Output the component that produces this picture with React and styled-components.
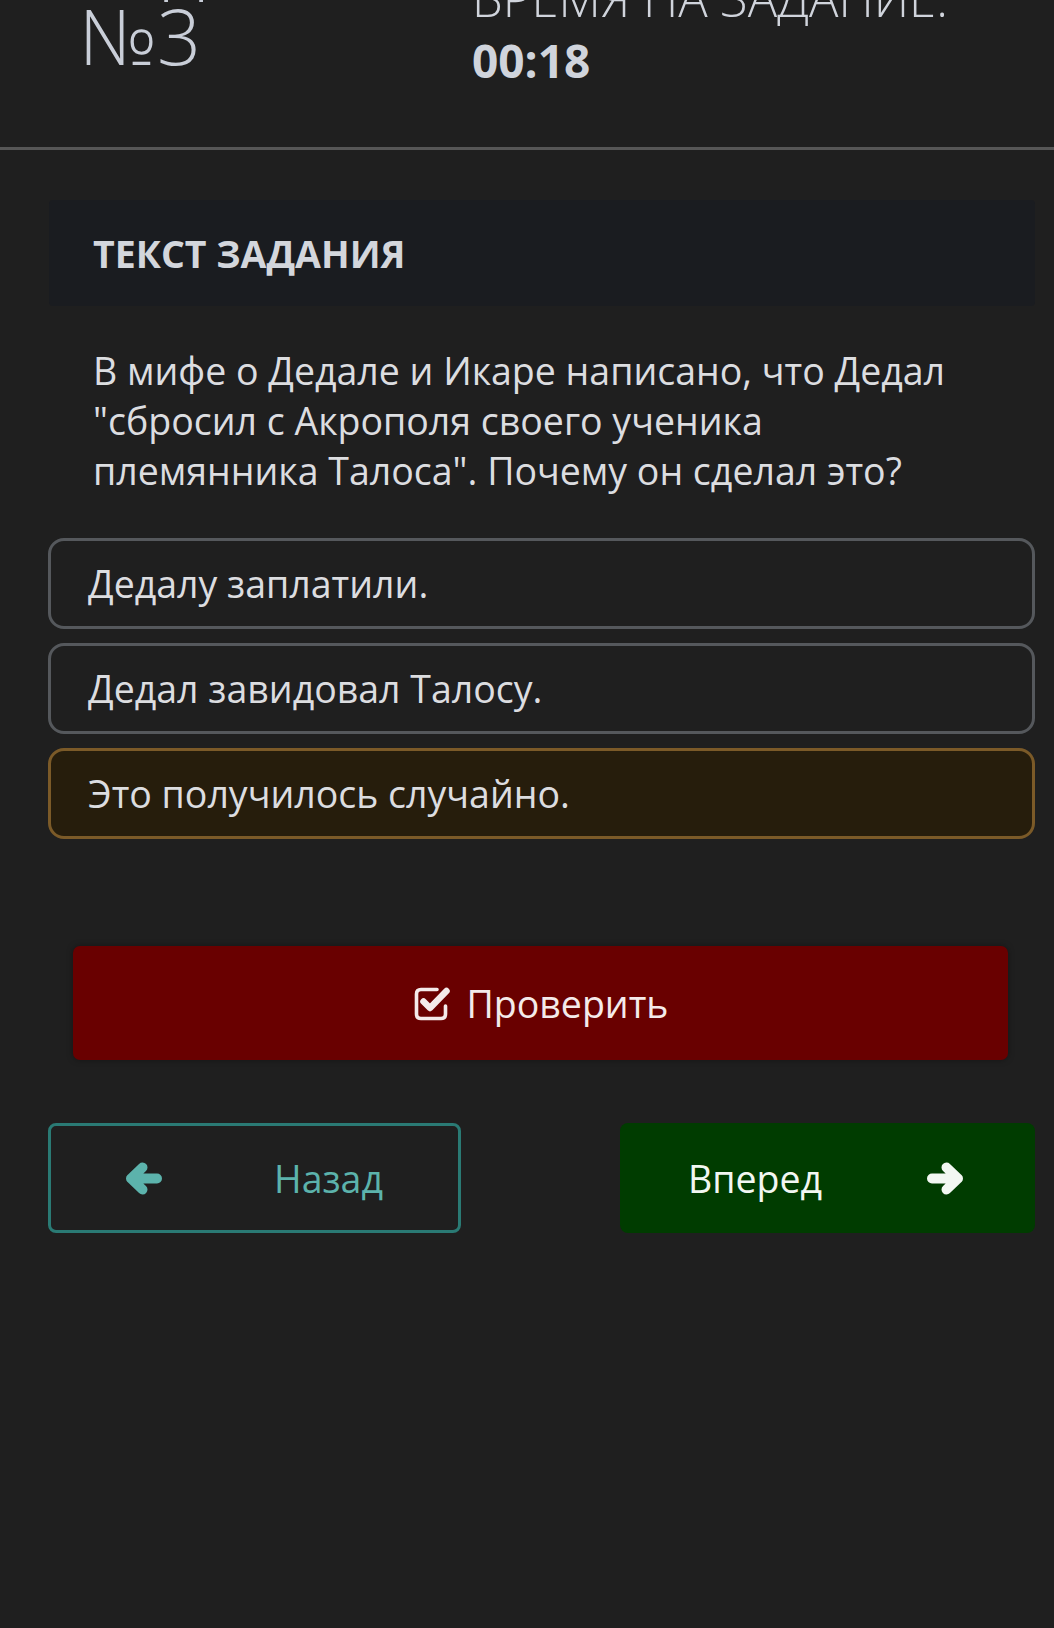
import React from "react";
import styled, { createGlobalStyle } from "styled-components";

const Global = createGlobalStyle`
  html, body {
    margin: 0;
    padding: 0;
    background: #1f1f1f;
    font-family: "Open Sans", "Noto Sans", sans-serif;
    overflow: hidden;
  }
  * { box-sizing: border-box; }
`;

const Page = styled.div`
  width: 1054px;
  min-height: 1628px;
  background: #1f1f1f;
  color: #dcdde0;
  overflow: hidden;
`;

const Header = styled.header`
  margin-top: -80px;
  height: 230px;
  border-bottom: 3px solid #565656;
  display: grid;
  grid-template-columns: 393px 1fr;
  padding-left: 79px;
  align-items: start;
`;

const TaskNumber = styled.h1`
  margin: 0;
  font-size: 77px;
  line-height: 77px;
  font-weight: 300;
  color: #c9ced8;
`;

const TimerBlock = styled.div`
  padding-top: 50px;
  display: flex;
  flex-direction: column;
  gap: 6px;
`;

const TimerLabel = styled.div`
  font-size: 49px;
  line-height: 57px;
  font-weight: 300;
  text-transform: uppercase;
  color: #d0d4dc;
  white-space: nowrap;
`;

const TimerValue = styled.div`
  font-size: 46px;
  line-height: 55px;
  font-weight: 700;
  color: #d0d4dc;
`;

const Main = styled.main`
  padding: 50px 19px 0 48px;
  display: flex;
  flex-direction: column;
`;

const TaskCard = styled.div`
  margin-left: 1px;
  height: 106px;
  background: #1a1c20;
  border-radius: 4px;
  display: flex;
  align-items: center;
  padding-left: 44px;
`;

const TaskCardTitle = styled.h2`
  margin: 0;
  font-size: 37.5px;
  font-weight: 700;
  color: #d3d6dc;
  text-transform: uppercase;
`;

const Question = styled.p`
  margin: 40px 0 42px;
  padding-left: 45px;
  padding-right: 60px;
  font-size: 37.5px;
  line-height: 50px;
  color: #dcdde0;
`;

const Options = styled.div`
  display: flex;
  flex-direction: column;
  gap: 14px;
`;

const Option = styled.div`
  height: 91px;
  border: 3px solid ${(p) => (p.$selected ? "#7b5a28" : "#55585c")};
  background: ${(p) => (p.$selected ? "#261d0c" : "transparent")};
  border-radius: 16px;
  display: flex;
  align-items: center;
  padding-left: 37px;
  font-size: 37.5px;
  color: #dcdde0;
`;

const CheckButton = styled.button`
  margin: 107px 27px 0 25px;
  height: 114px;
  border: none;
  border-radius: 7px;
  background: #690000;
  color: #f4eaea;
  font-family: inherit;
  font-size: 37.5px;
  display: flex;
  align-items: center;
  justify-content: center;
  gap: 14px;
  box-shadow: 0 0 6px rgba(0, 0, 0, 0.35);
`;

const NavRow = styled.div`
  margin-top: 63px;
  display: flex;
  justify-content: space-between;
`;

const NavButton = styled.button`
  width: ${(p) => (p.$primary ? "415px" : "413px")};
  height: 110px;
  border-radius: 8px;
  font-family: inherit;
  font-size: 37.5px;
  display: flex;
  align-items: center;
  justify-content: space-between;
  padding: ${(p) => (p.$primary ? "0 71px 0 68px" : "0 75px 0 74px")};
  border: ${(p) => (p.$primary ? "none" : "3px solid #2a7a74")};
  background: ${(p) => (p.$primary ? "#003c00" : "transparent")};
  color: ${(p) => (p.$primary ? "#f2f7f2" : "#5cb3ac")};
`;

function CheckSquareIcon() {
  return (
    <svg width="40" height="38" viewBox="0 0 40 38" fill="none" aria-hidden="true">
      <path
        d="M24 5.5 H8 Q3.5 5.5 3.5 10 V30 Q3.5 34.5 8 34.5 H28 Q32.5 34.5 32.5 30 V22"
        stroke="currentColor"
        strokeWidth="3.6"
        strokeLinecap="round"
        strokeLinejoin="round"
      />
      <path
        d="M10.5 17.5 L17 24 L33.5 7"
        stroke="currentColor"
        strokeWidth="6.5"
        strokeLinecap="round"
        strokeLinejoin="round"
      />
    </svg>
  );
}

function ArrowIcon({ dir }) {
  return (
    <svg
      width="38"
      height="33"
      viewBox="0 0 38 33"
      fill="none"
      aria-hidden="true"
      style={dir === "right" ? { transform: "scaleX(-1)" } : undefined}
    >
      <path
        d="M17.5 5.5 L6 16.5 L17.5 27.5 M6 16.5 H32"
        stroke="currentColor"
        strokeWidth="10"
        strokeLinecap="round"
        strokeLinejoin="round"
      />
    </svg>
  );
}

export default function App() {
  return (
    <Page>
      <Global />
      <Header>
        <TaskNumber>
          Задание
          <br />
          №3
        </TaskNumber>
        <TimerBlock>
          <TimerLabel>Время на задание:</TimerLabel>
          <TimerValue>00:18</TimerValue>
        </TimerBlock>
      </Header>
      <Main>
        <TaskCard>
          <TaskCardTitle>Текст задания</TaskCardTitle>
        </TaskCard>
        <Question>
          В мифе о Дедале и Икаре написано, что Дедал "сбросил с Акрополя своего ученика
          племянника Талоса". Почему он сделал это?
        </Question>
        <Options>
          <Option>Дедалу заплатили.</Option>
          <Option>Дедал завидовал Талосу.</Option>
          <Option $selected>Это получилось случайно.</Option>
        </Options>
        <CheckButton>
          <CheckSquareIcon />
          Проверить
        </CheckButton>
        <NavRow>
          <NavButton>
            <ArrowIcon dir="left" />
            Назад
          </NavButton>
          <NavButton $primary>
            Вперед
            <ArrowIcon dir="right" />
          </NavButton>
        </NavRow>
      </Main>
    </Page>
  );
}
